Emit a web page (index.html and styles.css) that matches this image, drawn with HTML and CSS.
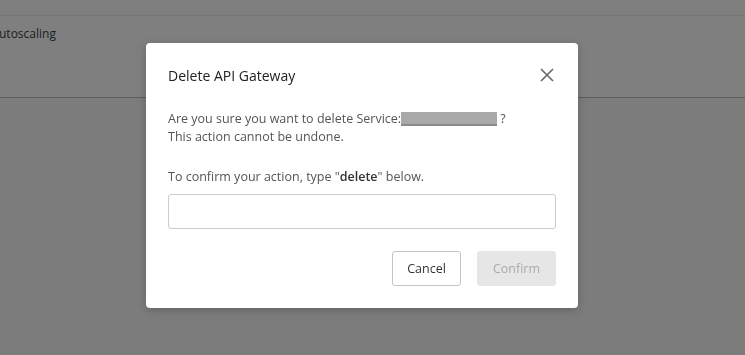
FILE: index.html
```html
<!DOCTYPE html>
<html lang="en">
<head>
    <meta charset="UTF-8">
    <title>Delete API Gateway</title>
    <link rel="stylesheet" href="styles.css">
</head>
<body>
    <div class="page">
        <div class="page-top"></div>
        <div class="page-row">utoscaling</div>
        <div class="page-rest"></div>
    </div>

    <div class="overlay">
        <div class="modal">
            <div class="modal-head">
                <h2>Delete API Gateway</h2>
                <span class="close">
                    <svg width="14" height="14" viewBox="0 0 14 14"><path d="M1 1L13 13M13 1L1 13" stroke="#666" stroke-width="1.6" fill="none"/></svg>
                </span>
            </div>
            <p class="msg">Are you sure you want to delete Service:<span class="redacted"></span> ?<br>This action cannot be undone.</p>
            <p class="msg">To confirm your action, type "<b>delete</b>" below.</p>
            <input class="confirm-input" type="text">
            <div class="actions">
                <button class="btn">Cancel</button>
                <button class="btn btn-disabled" disabled>Confirm</button>
            </div>
        </div>
    </div>
</body>
</html>
```

FILE: styles.css
```css
body {
    margin: 0;
    font-family: "Open Sans", sans-serif;
    background: #7f7f7f;
}
.page {
    height: 355px;
    overflow: hidden;
}
.page-top {
    height: 15px;
    border-bottom: 1px solid #767676;
}
.page-row {
    height: 82px;
    padding: 9px 0 0 0;
    box-sizing: border-box;
    font-size: 12px;
    color: #1c1c1c;
    border-bottom: 1px solid #5e5e5e;
    margin-left: -1px;
}
.page-rest {
    height: 260px;
    background: #7c7c7c;
}
.overlay {
    position: fixed;
    inset: 0;
    display: flex;
    justify-content: center;
    align-items: center;
    padding: 0 21px 4px 0;
}
.modal {
    width: 432px;
    height: 265px;
    box-sizing: border-box;
    background: #fff;
    border-radius: 4px;
    padding: 22px 22px 0 22px;
    box-shadow: 0 2px 10px rgba(0,0,0,0.2);
}
.modal-head {
    display: flex;
    justify-content: space-between;
    align-items: center;
    height: 20px;
    margin-bottom: 25px;
}
.modal-head h2 {
    margin: 0;
    font-size: 14px;
    font-weight: 400;
    color: #222;
}
.close {
    display: flex;
    margin-right: 2px;
}
.msg {
    margin: 0 0 22px 0;
    font-size: 12.5px;
    line-height: 18px;
    color: #555;
}
.msg + .msg {
    margin-bottom: 8px;
}
.msg b {
    color: #333;
    font-weight: 600;
}
.redacted {
    display: inline-block;
    width: 96px;
    height: 14px;
    vertical-align: -3px;
    background: #a9a9a9;
    border-bottom: 2px solid #8a8a8a;
    box-sizing: border-box;
}
.confirm-input {
    display: block;
    width: 388px;
    height: 35px;
    box-sizing: border-box;
    margin: 0;
    border: 1px solid #ccc;
    border-radius: 3px;
}
.actions {
    display: flex;
    justify-content: flex-end;
    gap: 16px;
    margin-top: 22px;
}
.btn {
    height: 35px;
    padding: 0 14px;
    font-family: "Open Sans", sans-serif;
    font-size: 12.5px;
    color: #333;
    background: #fff;
    border: 1px solid #c4c4c4;
    border-radius: 3px;
}
.btn-disabled {
    padding: 0 15px;
    background: #e6e6e6;
    border-color: #e6e6e6;
    color: #aaa;
}
```
